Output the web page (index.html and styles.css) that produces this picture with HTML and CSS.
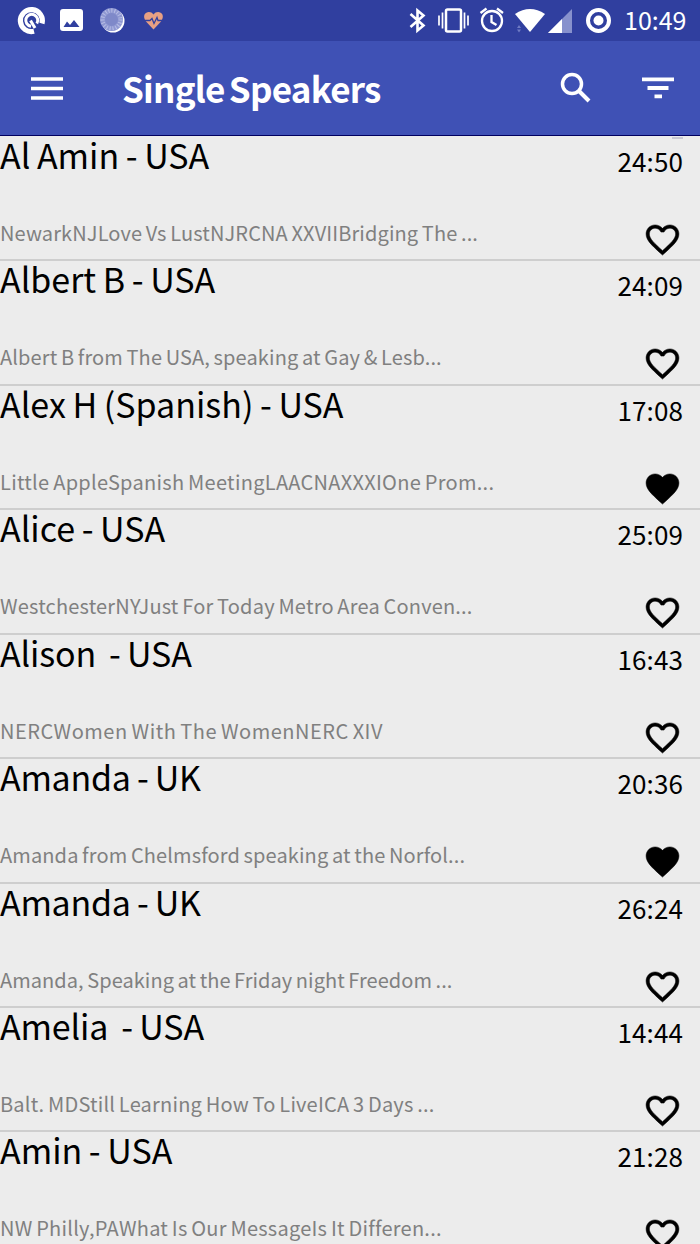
FILE: index.html
```html
<!DOCTYPE html>
<html lang="en">
<head>
    <meta charset="UTF-8">
    <meta name="viewport" content="width=device-width, initial-scale=1.0">
    <title>Single Speakers</title>
    <link rel="stylesheet" href="styles.css">
</head>
<body>
    <svg class="symbols" width="0" height="0">
        <symbol id="heart-outline" viewBox="0 0 24 24">
            <path d="M16.5 3c-1.74 0-3.41.81-4.5 2.09C10.91 3.81 9.24 3 7.5 3 4.42 3 2 5.42 2 8.5c0 3.78 3.4 6.86 8.55 11.54L12 21.35l1.45-1.32C18.6 15.36 22 12.28 22 8.5 22 5.42 19.58 3 16.5 3zm-4.4 15.55l-.1.1-.1-.1C7.14 14.24 4 11.39 4 8.5 4 6.5 5.5 5 7.5 5c1.54 0 3.04.99 3.57 2.36h1.87C13.46 5.99 14.96 5 16.5 5c2 0 3.5 1.5 3.5 3.5 0 2.89-3.14 5.74-7.9 10.05z"/>
        </symbol>
        <symbol id="heart-full" viewBox="0 0 24 24">
            <path d="M12 21.35l-1.45-1.32C5.4 15.36 2 12.28 2 8.5 2 5.42 4.42 3 7.5 3c1.74 0 3.41.81 4.5 2.09C13.09 3.81 14.76 3 16.5 3 19.58 3 22 5.42 22 8.5c0 3.78-3.4 6.86-8.55 11.54L12 21.35z"/>
        </symbol>
    </svg>

    <div class="status-bar">
        <svg class="status-icons" width="180" height="41" viewBox="0 0 180 41">
            <path d="M42 23.500A11 11 0 1 0 34 31.300" fill="none" stroke="#fff" stroke-width="5.200"/>
            <path d="M36.800 23.500A6 6 0 1 0 31 26.200" fill="none" stroke="#fff" stroke-width="3"/>
            <path d="M30.500 20.500l4.500 7.500" fill="none" stroke="#fff" stroke-width="3"/>
            <path d="M63 9h17a3 3 0 0 1 3 3v16a3 3 0 0 1-3 3H63a3 3 0 0 1-3-3V12a3 3 0 0 1 3-3zM63.500 27h16l-5.500-7-4 5-3-3.500z" fill="#fff" fill-rule="evenodd"/>
            <circle cx="113" cy="21" r="11.500" fill="#fff"/>
            <circle cx="111.500" cy="19.500" r="11.500" fill="#8f98d2"/>
            <circle cx="111.500" cy="19.500" r="9" fill="none" stroke="#b8bee5" stroke-width="4" stroke-dasharray="1 2"/>
            <circle cx="111.500" cy="19.500" r="6.500" fill="#7f89c9"/>
            <path d="M153.500 29.500L146 21.500C140 13 150 9 153.500 14.500C157 9 167 13 161 21.500Z" fill="#e8a083"/>
            <path d="M144 20.500h6l2-2 2 5 3-6 1 3h5" fill="none" stroke="#303f9f" stroke-width="1.300"/>
        </svg>
        <svg class="status-icons" width="215" height="41" viewBox="400 0 215 41">
            <path d="M410.500 14L423.500 25.500 417.500 30.500V10.500L423.500 15.500 410.500 27" fill="none" stroke="#fff" stroke-width="2.600"/>
            <rect x="446" y="9.500" width="15" height="22" rx="1.500" fill="none" stroke="#fff" stroke-width="2.500"/>
            <path d="M439 15.500v10M442.500 12.500v16M464.500 12.500v16M468 15.500v10" stroke="#fff" stroke-width="1.700"/>
            <circle cx="492" cy="21" r="10" fill="none" stroke="#fff" stroke-width="2.300"/>
            <path d="M491.500 15v7l5 3M480.500 13l6-4.500M497 8.500l6 4.500" fill="none" stroke="#fff" stroke-width="2.300"/>
            <path d="M530 32L515 14Q530 4 545 14Z" fill="#fff"/>
            <path d="M517 28l2-3 2 3zM517 29.500l2 3 2-3z" fill="#6f7bc4"/>
            <path d="M548 33L572 9V33Z" fill="#8791cd"/>
            <path d="M548 33L562 19V33Z" fill="#fff"/>
            <circle cx="598.500" cy="20.500" r="10.500" fill="none" stroke="#fff" stroke-width="4"/>
            <circle cx="598.500" cy="20.500" r="5" fill="#fff"/>
        </svg>
        <span class="clock">10:49</span>
    </div>

    <div class="toolbar">
        <svg class="menu-icon" width="32" height="23" viewBox="0 0 32 23">
            <path d="M0 2h32M0 11.500h32M0 21h32" stroke="#fff" stroke-width="3.500"/>
        </svg>
        <h1 class="title">Single Speakers</h1>
        <svg class="search-icon" width="32" height="32" viewBox="0 0 32 32">
            <circle cx="12" cy="12" r="9.500" fill="none" stroke="#fff" stroke-width="3.500"/>
            <path d="M18.500 18.500l10.500 10.500" stroke="#fff" stroke-width="4"/>
        </svg>
        <svg class="filter-icon" width="32" height="22" viewBox="0 0 32 22">
            <path d="M0 2.300h32M5.500 11h21M12.500 19.300h7.500" stroke="#fff" stroke-width="3.800"/>
        </svg>
    </div>

    <ul class="speakers">
        <li class="speaker">
            <div class="info"><h2 class="name">Al Amin - USA</h2><p class="description">NewarkNJLove Vs LustNJRCNA XXVIIBridging The ...</p></div>
            <div class="side"><span class="time">24:50</span><svg class="heart"><use href="#heart-outline"/></svg></div>
        </li>
        <li class="speaker">
            <div class="info"><h2 class="name">Albert B - USA</h2><p class="description">Albert B from The USA, speaking at Gay &amp; Lesb...</p></div>
            <div class="side"><span class="time">24:09</span><svg class="heart"><use href="#heart-outline"/></svg></div>
        </li>
        <li class="speaker">
            <div class="info"><h2 class="name">Alex H (Spanish) - USA</h2><p class="description">Little AppleSpanish MeetingLAACNAXXXIOne Prom...</p></div>
            <div class="side"><span class="time">17:08</span><svg class="heart"><use href="#heart-full"/></svg></div>
        </li>
        <li class="speaker">
            <div class="info"><h2 class="name">Alice - USA</h2><p class="description">WestchesterNYJust For Today Metro Area Conven...</p></div>
            <div class="side"><span class="time">25:09</span><svg class="heart"><use href="#heart-outline"/></svg></div>
        </li>
        <li class="speaker">
            <div class="info"><h2 class="name">Alison  - USA</h2><p class="description">NERCWomen With The WomenNERC XIV</p></div>
            <div class="side"><span class="time">16:43</span><svg class="heart"><use href="#heart-outline"/></svg></div>
        </li>
        <li class="speaker">
            <div class="info"><h2 class="name">Amanda - UK</h2><p class="description">Amanda from Chelmsford speaking at the Norfol...</p></div>
            <div class="side"><span class="time">20:36</span><svg class="heart"><use href="#heart-full"/></svg></div>
        </li>
        <li class="speaker">
            <div class="info"><h2 class="name">Amanda - UK</h2><p class="description">Amanda, Speaking at the Friday night Freedom ...</p></div>
            <div class="side"><span class="time">26:24</span><svg class="heart"><use href="#heart-outline"/></svg></div>
        </li>
        <li class="speaker">
            <div class="info"><h2 class="name">Amelia  - USA</h2><p class="description">Balt. MDStill Learning How To LiveICA 3 Days ...</p></div>
            <div class="side"><span class="time">14:44</span><svg class="heart"><use href="#heart-outline"/></svg></div>
        </li>
        <li class="speaker">
            <div class="info"><h2 class="name">Amin - USA</h2><p class="description">NW Philly,PAWhat Is Our MessageIs It Differen...</p></div>
            <div class="side"><span class="time">21:28</span><svg class="heart"><use href="#heart-outline"/></svg></div>
        </li>
    </ul>
</body>
</html>
```
FILE: styles.css
```css
* {
    box-sizing: border-box;
}

body {
    margin: 0;
    height: 1244px;
    overflow: hidden;
    background-color: #ececec;
    color: #000;
    font-family: 'Noto Sans CJK SC', 'Noto Sans', sans-serif;
}

.symbols {
    display: none;
}

.status-bar {
    display: flex;
    align-items: center;
    height: 41px;
    background-color: #303f9f;
    color: #fff;
}

.status-icons {
    display: block;
}

.status-icons + .status-icons {
    margin-left: 220px;
}

.clock {
    margin-left: 9px;
    font-size: 25px;
    line-height: 39px;
    padding-bottom: 2px;
}

.toolbar {
    display: flex;
    align-items: center;
    height: 95px;
    padding: 0 26px 0 31px;
    background-color: #3f51b5;
    border-bottom: 1px solid #00005f;
    color: #fff;
}

.title {
    flex: 1;
    margin: 0 0 0 59px;
    font-size: 35px;
    font-weight: bold;
    line-height: 50px;
    letter-spacing: -0.75px;
    word-spacing: -3px;
}

.search-icon {
    margin-right: 50px;
}

.speakers {
    position: relative;
    margin: 0;
    padding: 1px 0 0;
    list-style: none;
}

/* top edge of the fast scroll thumb */
.speakers::after {
    content: '';
    position: absolute;
    top: 1px;
    right: 17px;
    width: 11px;
    height: 2px;
    background-color: #c8c8d2;
}

.speaker {
    display: flex;
    justify-content: space-between;
    height: 124.430px;
    border-bottom: 2px solid #cecece;
}

.info,
.side {
    display: flex;
    flex-direction: column;
}

.name {
    margin: 0;
    font-size: 34px;
    font-weight: normal;
    line-height: 36px;
    white-space: pre;
    word-spacing: -1px;
}

.description {
    margin: 45px 0 0;
    font-size: 20px;
    line-height: 30px;
    color: #808080;
    white-space: nowrap;
    letter-spacing: 0.12px;
    word-spacing: -1px;
}

.speaker:nth-child(3) .description {
    letter-spacing: 0.28px;
}

.speaker:nth-child(4) .description {
    letter-spacing: 0.19px;
}

.speaker:nth-child(5) .description {
    letter-spacing: 0.5px;
}

.speaker:nth-child(7) .description {
    letter-spacing: 0.05px;
}

.speaker:nth-child(8) .description {
    letter-spacing: 0.2px;
}

.speaker:nth-child(9) .description {
    letter-spacing: 0.24px;
}

.speaker:nth-child(5) .name,
.speaker:nth-child(8) .name {
    letter-spacing: -0.15px;
}

.speaker:nth-child(6) .name,
.speaker:nth-child(7) .name {
    letter-spacing: -0.27px;
}

.side {
    align-items: flex-end;
    padding-right: 17px;
}

.time {
    margin-top: 4px;
    font-size: 26px;
    line-height: 40px;
    letter-spacing: 0.1px;
}

.heart {
    width: 41px;
    height: 41px;
    margin: 39px 0 0;
    stroke: #000;
    stroke-width: 0.3px;
}
```
